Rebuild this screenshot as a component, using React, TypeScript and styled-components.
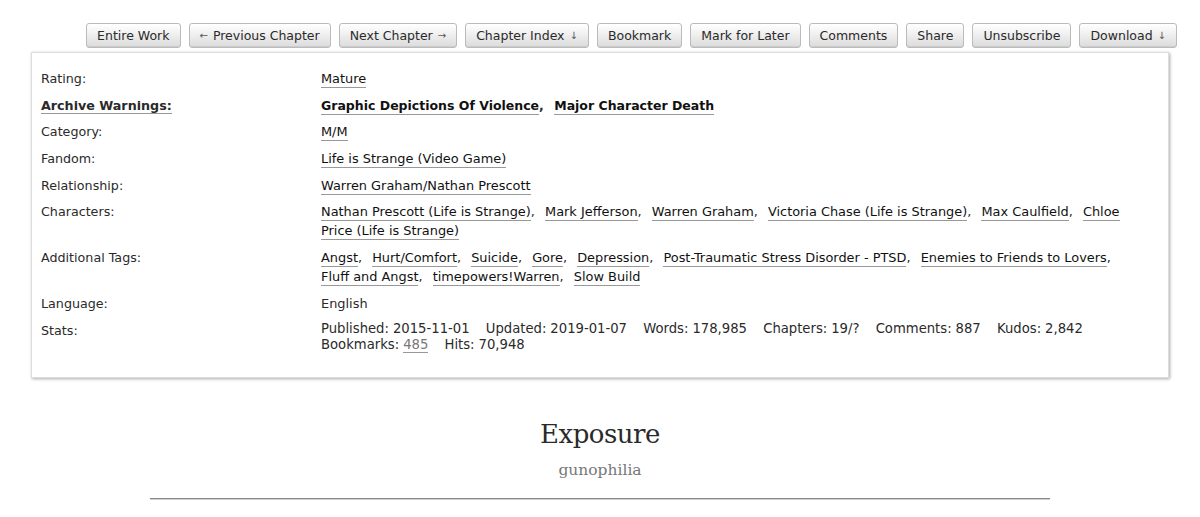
import React from "react";
import styled, { createGlobalStyle } from "styled-components";

const GlobalStyle = createGlobalStyle`
  html, body {
    margin: 0;
    padding: 0;
    background: #fff;
  }
  body {
    font-family: "DejaVu Sans", Verdana, sans-serif;
    color: #2a2a2a;
  }
  * { box-sizing: border-box; }
`;

const Page = styled.div`
  width: 1200px;
  padding-top: 23px;
`;

const NavBar = styled.ul`
  list-style: none;
  margin: 0;
  padding: 0 23px 0 0;
  display: flex;
  justify-content: flex-end;
  gap: 8px;
`;

const NavButton = styled.li`
  height: 25px;
  padding: 0 10px;
  display: flex;
  align-items: center;
  gap: 5px;
  border: 1px solid #bbb;
  border-radius: 3px;
  background: linear-gradient(#fff 2%, #ddd 95%);
  box-shadow: inset 0 -1px 0 #ccc;
  font-size: 12.5px;
  color: #2a2a2a;
  white-space: nowrap;
`;

const Arrow = styled.span`
  font-size: 10px;
  color: #555;
`;

const MetaBox = styled.dl`
  margin: 4px 31px 0;
  padding: 16px 20px 24px 9px;
  border: 1px solid #ddd;
  box-shadow: 1px 1px 3px #aaa;
  display: grid;
  grid-template-columns: 280px 1fr;
  font-size: 12.9px;
  line-height: 19px;
`;

const Label = styled.dt<{ $strong?: boolean }>`
  margin: 0 0 7.7px;
  font-size: 12.7px;
  font-weight: ${(p) => (p.$strong ? "bold" : "normal")};
  span {
    border-bottom: ${(p) => (p.$strong ? "1px solid #999" : "none")};
  }
`;

const Value = styled.dd<{ $last?: boolean }>`
  margin: 0 0 ${(p) => (p.$last ? "0" : "7.7px")};
`;

const TagList = styled.ul<{ $strong?: boolean }>`
  list-style: none;
  margin: 0;
  padding: 0;
  display: inline;
  font-weight: ${(p) => (p.$strong ? "bold" : "normal")};
  font-size: ${(p) => (p.$strong ? "12.5px" : "inherit")};
`;

const TagItem = styled.li`
  display: inline;
  &:not(:last-child)::after {
    content: ",";
    padding-right: 6px;
  }
`;

const Tag = styled.a`
  color: #111;
  text-decoration: none;
  border-bottom: 1px solid #999;
  padding-bottom: 1px;
`;

const Stats = styled.div`
  font-size: 13.2px;
  line-height: 16px;
`;

const Stat = styled.span`
  margin-right: 12px;
  white-space: nowrap;
`;

const StatName = styled.span`
  margin-right: 4px;
`;

const StatLink = styled.a`
  color: #777;
  text-decoration: none;
  border-bottom: 1px solid #999;
`;

const Preface = styled.div`
  margin-top: 39px;
  text-align: center;
`;

const Title = styled.h2`
  margin: 0;
  font-family: "DejaVu Serif", Georgia, serif;
  font-weight: normal;
  font-size: 26px;
  line-height: 34px;
  color: #2a2a2a;
  letter-spacing: -0.5px;
`;

const Byline = styled.h3`
  margin: 9px 0 0;
  font-family: "DejaVu Serif", Georgia, serif;
  font-weight: normal;
  font-size: 15.5px;
  line-height: 20px;
  color: #777;
`;

const Divider = styled.hr`
  width: 900px;
  margin: 18px auto 0;
  border: 0;
  border-top: 1px solid #8a8a8a;
  border-bottom: 1px solid #cfcfcf;
`;

type Nav = { text: string; before?: string; after?: string };

const navItems: Nav[] = [
  { text: "Entire Work" },
  { text: "Previous Chapter", before: "←" },
  { text: "Next Chapter", after: "→" },
  { text: "Chapter Index", after: "↓" },
  { text: "Bookmark" },
  { text: "Mark for Later" },
  { text: "Comments" },
  { text: "Share" },
  { text: "Unsubscribe" },
  { text: "Download", after: "↓" },
];

type Row = { label: string; tags?: string[]; strong?: boolean; text?: string };

const rows: Row[] = [
  { label: "Rating:", tags: ["Mature"] },
  {
    label: "Archive Warnings:",
    tags: ["Graphic Depictions Of Violence", "Major Character Death"],
    strong: true,
  },
  { label: "Category:", tags: ["M/M"] },
  { label: "Fandom:", tags: ["Life is Strange (Video Game)"] },
  { label: "Relationship:", tags: ["Warren Graham/Nathan Prescott"] },
  {
    label: "Characters:",
    tags: [
      "Nathan Prescott (Life is Strange)",
      "Mark Jefferson",
      "Warren Graham",
      "Victoria Chase (Life is Strange)",
      "Max Caulfield",
      "Chloe Price (Life is Strange)",
    ],
  },
  {
    label: "Additional Tags:",
    tags: [
      "Angst",
      "Hurt/Comfort",
      "Suicide",
      "Gore",
      "Depression",
      "Post-Traumatic Stress Disorder - PTSD",
      "Enemies to Friends to Lovers",
      "Fluff and Angst",
      "timepowers!Warren",
      "Slow Build",
    ],
  },
  { label: "Language:", text: "English" },
];

const stats: [string, string][] = [
  ["Published:", "2015-11-01"],
  ["Updated:", "2019-01-07"],
  ["Words:", "178,985"],
  ["Chapters:", "19/?"],
  ["Comments:", "887"],
  ["Kudos:", "2,842"],
];

export default function App() {
  return (
    <Page>
      <GlobalStyle />
      <NavBar>
        {navItems.map((n) => (
          <NavButton key={n.text}>
            {n.before && <Arrow>{n.before}</Arrow>}
            <span>{n.text}</span>
            {n.after && <Arrow>{n.after}</Arrow>}
          </NavButton>
        ))}
      </NavBar>
      <MetaBox>
        {rows.map((r) => (
          <React.Fragment key={r.label}>
            <Label $strong={r.strong}>
              <span>{r.label}</span>
            </Label>
            <Value>
              {r.tags ? (
                <TagList $strong={r.strong}>
                  {r.tags.map((t) => (
                    <React.Fragment key={t}>
                      <TagItem>
                        <Tag>{t}</Tag>
                      </TagItem>{" "}
                    </React.Fragment>
                  ))}
                </TagList>
              ) : (
                r.text
              )}
            </Value>
          </React.Fragment>
        ))}
        <Label>Stats:</Label>
        <Value $last>
          <Stats>
            {stats.map(([k, v]) => (
              <React.Fragment key={k}>
                <Stat>
                  <StatName>{k}</StatName>
                  {v}
                </Stat>{" "}
              </React.Fragment>
            ))}
            <Stat>
              <StatName>Bookmarks:</StatName>
              <StatLink>485</StatLink>
            </Stat>{" "}
            <Stat>
              <StatName>Hits:</StatName>70,948
            </Stat>
          </Stats>
        </Value>
      </MetaBox>
      <Preface>
        <Title>Exposure</Title>
        <Byline>gunophilia</Byline>
        <Divider />
      </Preface>
    </Page>
  );
}
